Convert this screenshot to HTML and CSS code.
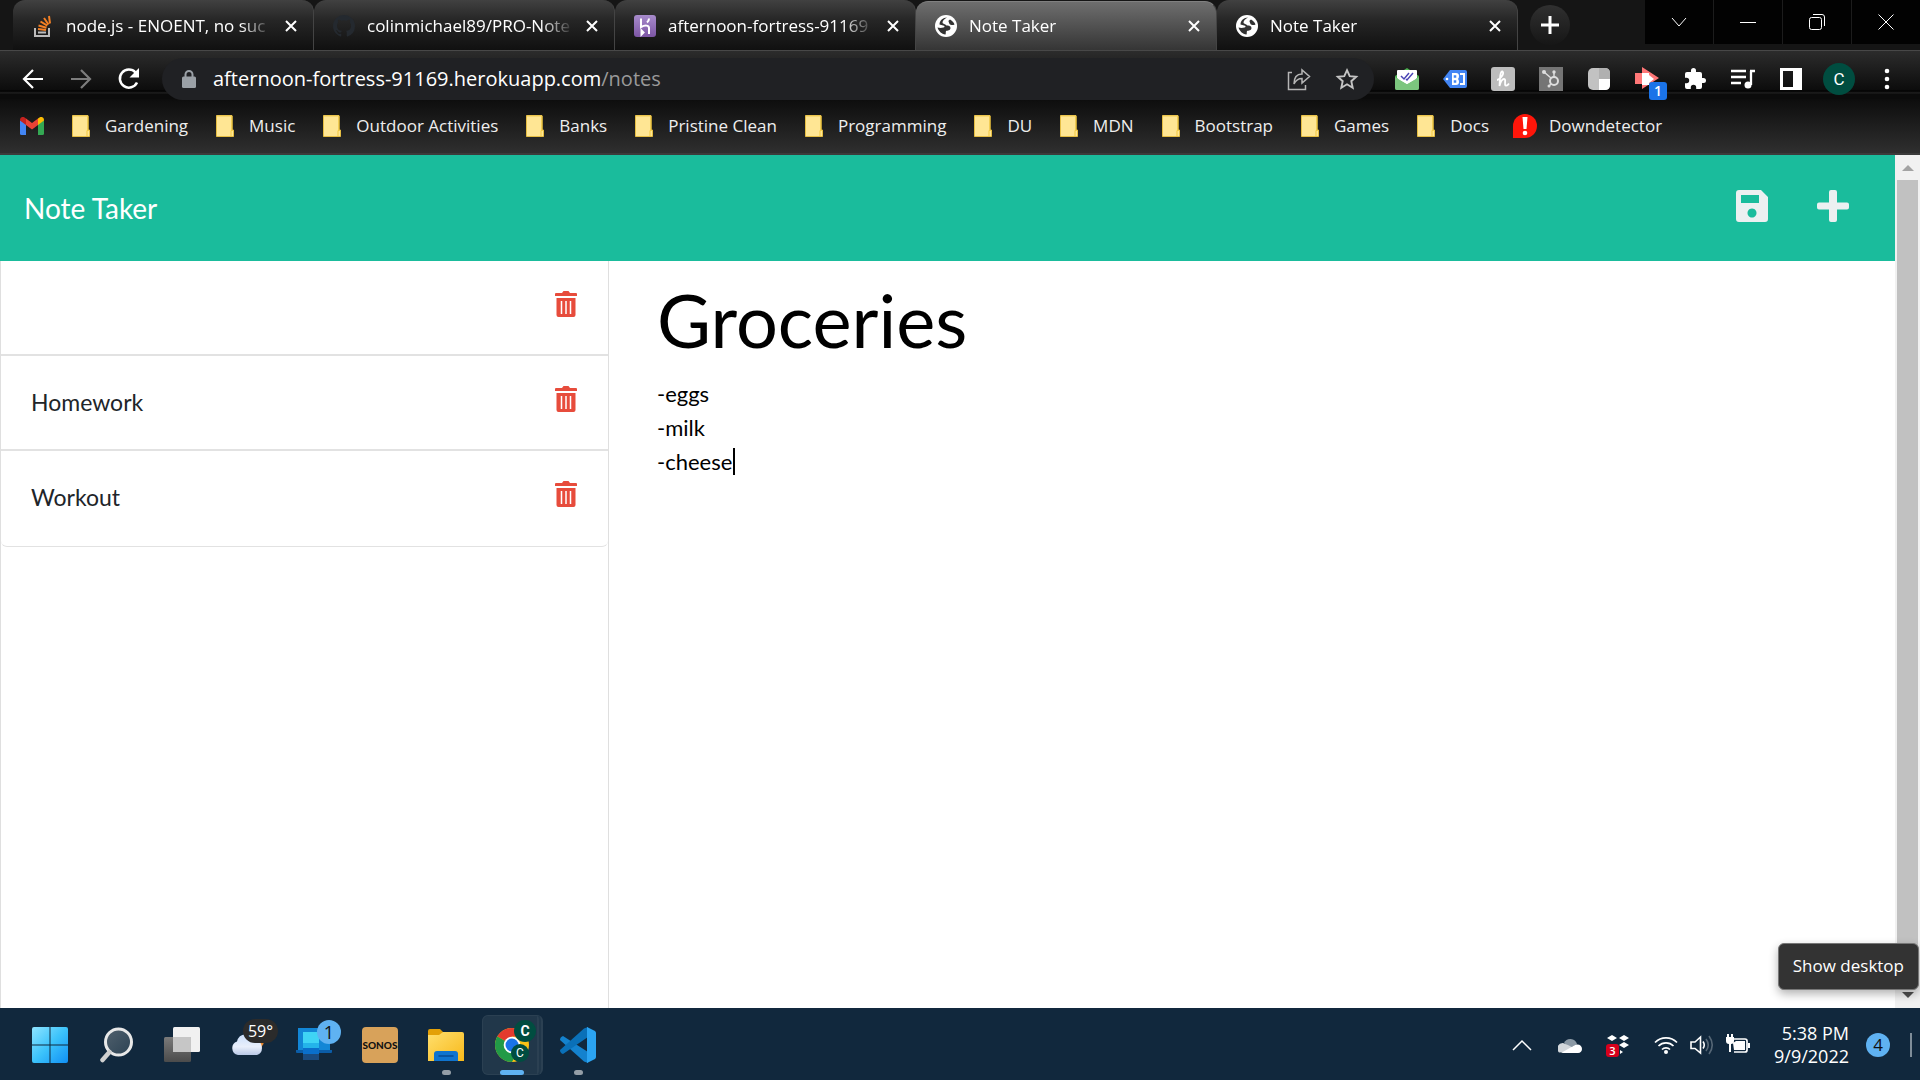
FILE: index.html
```html
<!DOCTYPE html>
<html lang="en">
<head>
<meta charset="utf-8">
<title>Note Taker</title>
<link rel="stylesheet" href="styles.css">
</head>
<body>
<svg class="sprite" aria-hidden="true">
  <defs>
    <linearGradient id="gWin" x1="0" y1="0" x2="1" y2="1"><stop offset="0" stop-color="#8fe4ff"/><stop offset=".5" stop-color="#3cc3fb"/><stop offset="1" stop-color="#1090f5"/></linearGradient>
    <linearGradient id="gCloud" x1="0" y1="0" x2="0" y2="1"><stop offset="0" stop-color="#c9defc"/><stop offset=".6" stop-color="#e9effb"/><stop offset="1" stop-color="#b9c8e6"/></linearGradient>
    <linearGradient id="gFolder" x1="0" y1="0" x2="1" y2="1"><stop offset="0" stop-color="#ffdf6e"/><stop offset="1" stop-color="#f8b91a"/></linearGradient>
    <linearGradient id="gHeroku" x1="0" y1="0" x2="0" y2="1"><stop offset="0" stop-color="#a78bcb"/><stop offset="1" stop-color="#7d56a5"/></linearGradient>
    <linearGradient id="gGlass" x1="0" y1="0" x2="1" y2="1"><stop offset="0" stop-color="#51616e"/><stop offset="1" stop-color="#2c4253"/></linearGradient>
    <linearGradient id="gBack" x1="0" y1="0" x2="0" y2="1"><stop offset="0" stop-color="#7a7a7a"/><stop offset="1" stop-color="#4b4b4b"/></linearGradient>
  </defs>
  <symbol id="close" viewBox="0 0 12 12"><path d="M1 1l10 10M11 1L1 11" fill="none" stroke="currentColor" stroke-width="2"/></symbol>
  <symbol id="folder" viewBox="0 0 18 22"><path d="M.5.5h15.500v14.500h1.500v6.500H.5z" fill="#ffe694" stroke="#e5bd42"/><path d="M15 21v-5.500h1.500M16 1v14" fill="none" stroke="#f3c93e"/><path d="M1 1h15" stroke="#f0cc58"/></symbol>
  <symbol id="globe" viewBox="0 0 22 22"><circle cx="11" cy="11" r="11" fill="#fff"/><path d="M12 2.500C9 4 7.500 5.500 7.500 8c1.500 1.500 3 1 4 2.500 2 0 4 .5 4 2.500 0 2.500-3 2.500-4.500 3-.5 1.500 0 2.500-.5 3.500C6.500 19 3.500 16 2.500 12.500c2 .5 4 .5 6 0 1 0 1.500-1.200.5-1.800L4.500 9.500C4.500 5.500 8 2.500 12 2.500zM19.500 9.500c-2 1-4 .5-5-.5l-1-2.500c0-1 .5-1.500 1.500-2 2 1 4 3 4.500 5z" fill="#333"/></symbol>
  <symbol id="trash" viewBox="0 0 22 26"><path d="M1 2h6l1.500-2h5L15 2h6q1 0 1 1v2H0V3q0-1 1-1zM1.500 7h19v17q0 2-2 2h-15q-2 0-2-2z" fill="currentColor"/><path d="M6.500 10v13M11 10v13M15.500 10v13" stroke="#fff" stroke-width="1.500"/></symbol>
</svg>

<div class="screen">
  <header class="browser">
    <div class="tabstrip">
      <div class="tab">
        <svg class="fav" viewBox="0 0 22 22"><path d="M3 13v8h14v-8M6 17.500h8" fill="none" stroke="#bcbbbb" stroke-width="2"/><path d="M6 14l8 1M6.500 10.500l8 2.200M8.500 6.500l6.800 4.200M12 3l4.500 6.500M17 1l1 7.500" stroke="#f48024" stroke-width="2"/></svg>
        <span class="tab-title">node.js - ENOENT, no suc</span>
        <button class="tab-close" aria-label="Close tab"><svg viewBox="0 0 12 12"><use href="#close"/></svg></button>
      </div>
      <div class="tab">
        <svg class="fav" viewBox="0 0 16 16"><path fill="#24292f" d="M8 0C3.580 0 0 3.580 0 8c0 3.540 2.290 6.530 5.470 7.590.4.070.55-.17.55-.38 0-.19-.01-.82-.01-1.490-2.010.37-2.530-.49-2.690-.94-.09-.23-.48-.94-.82-1.130-.28-.15-.68-.52-.01-.53.63-.01 1.080.58 1.230.82.72 1.210 1.870.87 2.330.66.070-.52.28-.87.51-1.070-1.780-.2-3.640-.89-3.640-3.950 0-.87.31-1.590.82-2.150-.08-.2-.36-1.020.08-2.120 0 0 .67-.21 2.200.82a7.600 7.600 0 0 1 4 0c1.530-1.040 2.200-.82 2.200-.82.44 1.100.16 1.920.08 2.120.51.56.82 1.270.82 2.150 0 3.070-1.870 3.750-3.650 3.950.29.25.54.73.54 1.480 0 1.070-.01 1.930-.01 2.200 0 .21.15.46.55.38A8 8 0 0 0 16 8c0-4.420-3.580-8-8-8z"/></svg>
        <span class="tab-title">colinmichael89/PRO-Note</span>
        <button class="tab-close" aria-label="Close tab"><svg viewBox="0 0 12 12"><use href="#close"/></svg></button>
      </div>
      <div class="tab">
        <svg class="fav" viewBox="0 0 22 22"><rect width="22" height="22" rx="3" fill="url(#gHeroku)"/><path d="M7 3.500v8.500c4-2 8-2 8 1v6M15 3.500c0 1.500-.8 3-2 4M7.500 15.500v4l2-2z" fill="none" stroke="#fff" stroke-width="2"/></svg>
        <span class="tab-title">afternoon-fortress-91169</span>
        <button class="tab-close" aria-label="Close tab"><svg viewBox="0 0 12 12"><use href="#close"/></svg></button>
      </div>
      <div class="tab active">
        <svg class="fav" viewBox="0 0 22 22"><use href="#globe"/></svg>
        <span class="tab-title">Note Taker</span>
        <button class="tab-close" aria-label="Close tab"><svg viewBox="0 0 12 12"><use href="#close"/></svg></button>
      </div>
      <div class="tab">
        <svg class="fav" viewBox="0 0 22 22"><use href="#globe"/></svg>
        <span class="tab-title">Note Taker</span>
        <button class="tab-close" aria-label="Close tab"><svg viewBox="0 0 12 12"><use href="#close"/></svg></button>
      </div>
      <button class="new-tab" aria-label="New tab"><svg viewBox="0 0 18 18"><path d="M9 0v18M0 9h18" stroke="#fff" stroke-width="3"/></svg></button>
      <div class="window-controls">
        <button aria-label="Search tabs"><svg viewBox="0 0 16 16"><path d="M1 4l7 8 7-8" fill="none" stroke="#fff"/></svg></button>
        <button aria-label="Minimize"><svg viewBox="0 0 16 16"><path d="M0 8.500h16" stroke="#fff"/></svg></button>
        <button aria-label="Restore"><svg viewBox="0 0 16 16"><rect x=".5" y="3.500" width="12" height="12" rx="2" fill="none" stroke="#fff"/><path d="M4 .5h9q2.500 0 2.500 2.500v9" fill="none" stroke="#fff"/></svg></button>
        <button aria-label="Close"><svg viewBox="0 0 16 16"><path d="M.5.5l15 15M15.500.5l-15 15" stroke="#fff"/></svg></button>
      </div>
    </div>

    <div class="toolbar">
      <div class="icon-row">
        <button aria-label="Back"><svg viewBox="0 0 24 24"><path d="M22 12H3M12 3l-9 9 9 9" fill="none" stroke="#fff" stroke-width="2.200"/></svg></button>
        <button aria-label="Forward"><svg viewBox="0 0 24 24"><path d="M2 12h19M12 3l9 9-9 9" fill="none" stroke="#7d7d7d" stroke-width="2.200"/></svg></button>
        <button aria-label="Reload"><svg viewBox="0 0 24 24"><path d="M20 15.500A9 9 0 1 1 18.500 5.500L21 8" fill="none" stroke="#fff" stroke-width="2.500"/><path d="M22 1v9.500h-9.500z" fill="#fff"/></svg></button>
      </div>
      <div class="omnibox">
        <svg class="lock" viewBox="0 0 14 18"><path d="M3.500 8V4.500a3.500 3.500 0 0 1 7 0V8" fill="none" stroke="#9aa0a6" stroke-width="2"/><rect y="6.500" width="14" height="11.500" rx="1.500" fill="#9aa0a6"/></svg>
        <span class="url"><b>afternoon-fortress-91169.herokuapp.com</b>/notes</span>
        <button aria-label="Share"><svg viewBox="0 0 24 24"><path d="M5 5.500H1.500v17h17V18M7 17c0-7 3-10 8-10V3l7.500 6.500L15 16v-4.500c-4 0-6 1.500-8 5.500z" fill="none" stroke="#b5b5b5" stroke-width="1.500"/></svg></button>
        <button aria-label="Bookmark this tab"><svg viewBox="0 0 24 24"><path d="M12 3.200l2.700 6 6.500.6-4.900 4.400 1.400 6.500-5.700-3.400-5.700 3.400 1.400-6.500L2.800 9.800l6.500-.6z" fill="none" stroke="#c4c4c4" stroke-width="1.900"/></svg></button>
      </div>
      <div class="icon-row">
        <button aria-label="Mail tracker"><svg viewBox="0 0 24 24"><path d="M0 9L12 1l12 8v12q0 2-2 2H2q-2 0-2-2z" fill="#4caf50"/><path d="M3 3h18v10l-9 5-9-5z" fill="#fff"/><path d="M0 10l12 7 12-7v11q0 2-2 2H2q-2 0-2-2z" fill="#7cc67e"/><path d="M2 4q0-1 1-1h18q1 0 1 1v7l-10 6-10-6z" fill="#fff"/><path d="M6 9l3 3 5-6M11 12l1 1 6-7" fill="none" stroke="#4a45b5" stroke-width="1.500"/></svg></button>
        <button aria-label="Shopping tag"><svg viewBox="0 0 24 24"><path d="M7 3h15q2 0 2 2v14q0 2-2 2H7l-7-9z" fill="#4285f4"/><circle cx="4" cy="12" r="1.300" fill="#fff"/><path d="M9 6h4q3 0 3 3 0 2-1 3 1 1 1 3 0 3-3 3H9z" fill="#fff"/><path d="M12 9.500v.01M12 14.500v.01" stroke="#4285f4" stroke-width="2.500" stroke-linecap="square"/><path d="M17 7h4v10h-4" fill="none" stroke="#fff" stroke-width="2"/></svg></button>
        <button aria-label="Honey"><svg viewBox="0 0 24 24"><rect width="24" height="24" rx="3" fill="#bdbdbd"/><path d="M6 13c3 0 8-7 5.500-8.500C9 4 9 12 8.500 19c1-4 2.500-7 4.500-7 2.500 0 0 5 1.500 6.500 1 .5 2.500-.5 3.500-2" fill="none" stroke="#fff" stroke-width="1.800"/></svg></button>
        <button aria-label="HubSpot"><svg viewBox="0 0 24 24"><rect width="24" height="24" fill="#757575"/><circle cx="15" cy="14" r="4" fill="none" stroke="#ddd" stroke-width="2"/><path d="M5 5l7 6M15 10V5M12 17l-2 2" stroke="#ddd" stroke-width="1.500"/><circle cx="5" cy="5" r="2" fill="#ddd"/><circle cx="15" cy="5" r="1.700" fill="#ddd"/><circle cx="10" cy="19" r="1.500" fill="#ddd"/></svg></button>
        <button aria-label="Extension"><svg viewBox="0 0 24 24"><rect x="1" y="1" width="22" height="22" rx="5" fill="#c2c2c2"/><path d="M12 1h6q5 0 5 5v6H12z" fill="#b0b0b0"/><path d="M12 12h11v6q0 5-5 5h-6z" fill="#fff"/></svg></button>
        <button class="badged" aria-label="Screen recorder"><svg viewBox="0 0 24 24"><path d="M0 6h7V0l17 11L7 22v-5H0z" fill="#f77"/><path d="M7 6h7v2l5 4-5 4v2H7z" fill="#fff"/></svg><span class="ext-badge">1</span></button>
        <button aria-label="Extensions"><svg viewBox="0 0 24 24"><path d="M20.500 11H19V7a2 2 0 0 0-2-2h-4V3.500a2.500 2.500 0 0 0-5 0V5H4a2 2 0 0 0-2 2v3.800h1.500a2.700 2.700 0 0 1 0 5.400H2V20a2 2 0 0 0 2 2h3.800v-1.500a2.700 2.700 0 0 1 5.400 0V22H17a2 2 0 0 0 2-2v-4h1.500a2.500 2.500 0 0 0 0-5z" fill="#fff"/></svg></button>
        <button aria-label="Media controls"><svg viewBox="0 0 24 24"><path d="M0 4h15M0 10h15M0 16h10M20 4v14M19 4h5" stroke="#fff" stroke-width="2.300"/><circle cx="17" cy="18" r="3.500" fill="#fff"/></svg></button>
        <button aria-label="Side panel"><svg viewBox="0 0 24 24"><path d="M1 1h22v22H1zM4 4v16h10V4z" fill="#fff" fill-rule="evenodd"/></svg></button>
        <button aria-label="Profile"><span class="avatar">C</span></button>
        <button aria-label="Menu"><svg viewBox="0 0 24 24"><circle cx="12" cy="4" r="2.300" fill="#fff"/><circle cx="12" cy="12" r="2.300" fill="#fff"/><circle cx="12" cy="20" r="2.300" fill="#fff"/></svg></button>
      </div>
    </div>

    <nav class="bookmarks">
      <a href="#" aria-label="Gmail"><svg class="mark" viewBox="0 0 24 18"><path d="M0 3v13.500Q0 18 1.500 18H6V7z" fill="#4285f4"/><path d="M24 3v13.500q0 1.500-1.500 1.500H18V7z" fill="#34a853"/><path d="M18 1.500V8l6-4.500V3c0-2.500-2.500-4-4.500-2.600z" fill="#fbbc04"/><path d="M6 8V1.500L12 6l6-4.500V8l-6 4.500z" fill="#ea4335"/><path d="M0 3v.5L6 8V1.500L4.500.4C2.500-1 0 .5 0 3z" fill="#c5221f"/></svg></a>
      <a href="#"><svg class="dir" viewBox="0 0 18 22"><use href="#folder"/></svg>Gardening</a>
      <a href="#"><svg class="dir" viewBox="0 0 18 22"><use href="#folder"/></svg>Music</a>
      <a href="#"><svg class="dir" viewBox="0 0 18 22"><use href="#folder"/></svg>Outdoor Activities</a>
      <a href="#"><svg class="dir" viewBox="0 0 18 22"><use href="#folder"/></svg>Banks</a>
      <a href="#"><svg class="dir" viewBox="0 0 18 22"><use href="#folder"/></svg>Pristine Clean</a>
      <a href="#"><svg class="dir" viewBox="0 0 18 22"><use href="#folder"/></svg>Programming</a>
      <a href="#"><svg class="dir" viewBox="0 0 18 22"><use href="#folder"/></svg>DU</a>
      <a href="#"><svg class="dir" viewBox="0 0 18 22"><use href="#folder"/></svg>MDN</a>
      <a href="#"><svg class="dir" viewBox="0 0 18 22"><use href="#folder"/></svg>Bootstrap</a>
      <a href="#"><svg class="dir" viewBox="0 0 18 22"><use href="#folder"/></svg>Games</a>
      <a href="#"><svg class="dir" viewBox="0 0 18 22"><use href="#folder"/></svg>Docs</a>
      <a href="#"><svg class="mark alert" viewBox="0 0 24 24"><path d="M12 0a12 12 0 0 1 0 24H0V12A12 12 0 0 1 12 0z" fill="#ff160a"/><path d="M9.500 3h5l-1 12h-3z" fill="#fff"/><circle cx="12" cy="19" r="2.300" fill="#fff"/></svg>Downdetector</a>
    </nav>
  </header>

  <div class="viewport">
    <div class="page">
      <nav class="navbar">
        <a class="brand" href="#">Note Taker</a>
        <div class="actions">
          <button aria-label="Save note"><svg viewBox="0 0 32 32"><path d="M3 0h22l7 7v22q0 3-3 3H3q-3 0-3-3V3q0-3 3-3zM5 5v8h18V5zM16 18.500a4.500 4.500 0 1 0 .01 0z" fill="#ecf0f1" fill-rule="evenodd"/></svg></button>
          <button aria-label="New note"><svg viewBox="0 0 32 32"><path d="M14 0h4q2 0 2 2v10.500h10q2 0 2 2v3q0 2-2 2H20V30q0 2-2 2h-4q-2 0-2-2V19.500H2q-2 0-2-2v-3q0-2 2-2h10V2q0-2 2-2z" fill="#ecf0f1"/></svg></button>
        </div>
      </nav>
      <main class="workspace">
        <aside class="sidebar">
          <ul class="notes">
            <li><span></span><button aria-label="Delete note"><svg viewBox="0 0 22 26"><use href="#trash"/></svg></button></li>
            <li><span>Homework</span><button aria-label="Delete note"><svg viewBox="0 0 22 26"><use href="#trash"/></svg></button></li>
            <li><span>Workout</span><button aria-label="Delete note"><svg viewBox="0 0 22 26"><use href="#trash"/></svg></button></li>
          </ul>
        </aside>
        <section class="editor">
          <input class="note-title" type="text" aria-label="Note title" value="Groceries">
          <div class="note-body">
            <textarea aria-label="Note text">-eggs
-milk
-cheese</textarea>
            <span class="caret"></span>
          </div>
        </section>
      </main>
    </div>
    <div class="scrollbar">
      <svg viewBox="0 0 12 6"><path d="M6 0l6 6H0z" fill="#a3a3a3"/></svg>
      <div class="thumb"></div>
      <svg viewBox="0 0 12 6"><path d="M0 0h12L6 6z" fill="#505050"/></svg>
    </div>
    <div class="tooltip" role="tooltip">Show desktop</div>
  </div>

  <footer class="taskbar">
    <div class="apps">
      <button aria-label="Start"><svg viewBox="0 0 36 36"><path d="M2 0h15.500v17.500H0V2q0-2 2-2zM18.500 0H34q2 0 2 2v15.500H18.500zM0 18.500h17.500V36H2q-2 0-2-2zM18.500 18.500H36V34q0 2-2 2H18.500z" fill="url(#gWin)"/></svg></button>
      <button aria-label="Search"><svg viewBox="0 0 36 36"><circle cx="20.500" cy="15" r="13" fill="url(#gGlass)" stroke="#e8e8e8" stroke-width="3"/><path d="M11.500 25l-7 8" stroke="#d0d0d0" stroke-width="4.500" stroke-linecap="round"/></svg></button>
      <button aria-label="Task view"><svg viewBox="0 0 36 36"><rect y="10" width="27" height="25" rx="1.500" fill="url(#gBack)"/><rect x="9" width="27" height="25" rx="1.500" fill="#f1f1f1"/><path d="M9 10h18v15H9z" fill="#c6c6c6"/></svg></button>
      <button aria-label="Weather"><svg viewBox="0 0 36 36"><circle cx="26" cy="14" r="8" fill="#e8862c"/><path d="M8 28a7 7 0 0 1-1-13.500 9.500 9.500 0 0 1 18-1.500A7.800 7.800 0 0 1 27 28z" fill="url(#gCloud)"/></svg><span class="badge temp">59°</span></button>
      <button aria-label="Phone Link"><svg viewBox="0 0 36 36"><path d="M2 1h32v24H2z" fill="#1286d6"/><path d="M0 23h36v2q0 1-1 1H1q-1 0-1-1z" fill="#0b5da8"/><path d="M7 5h16v12H7z" fill="#3fd4f5"/><path d="M7 16h16v6H7z" fill="#24b4ea"/><path d="M7 21h16v6H7z" fill="#0a6fcb"/><path d="M7 27h16v6H7z" fill="#1a4b80"/></svg><span class="badge count">1</span></button>
      <button aria-label="Sonos"><span class="sonos">SONOS</span></button>
      <button class="running" aria-label="File Explorer"><svg viewBox="0 0 36 36"><path d="M0 4q0-2 2-2h10l3 3v5H0z" fill="#e3a008"/><path d="M0 8h11l4-3h19q2 0 2 2v27H0z" fill="url(#gFolder)"/><path d="M6 34v-7q0-3 3-3h18q3 0 3 3v7z" fill="#0f74cf"/><path d="M11 29h14" stroke="#084b92" stroke-width="1.500" stroke-linecap="round"/></svg></button>
      <button class="current" aria-label="Google Chrome"><svg viewBox="0 0 36 36"><circle cx="18" cy="18" r="17" fill="#fbc116"/><path d="M18 18L3.300 9.500A17 17 0 0 1 32.700 9.500H18z" fill="#e33b2e"/><path d="M18 18L3.300 9.500A17 17 0 0 0 18 35l7-13z" fill="#229a47"/><circle cx="18" cy="18" r="8.300" fill="#fff"/><circle cx="18" cy="18" r="6.500" fill="#1a73e8"/></svg><span class="badge chrome-a">C</span><span class="badge chrome-b">C</span></button>
      <button class="running" aria-label="Visual Studio Code"><svg viewBox="0 0 36 36"><path d="M3 9q-3 1-3 4l24 21.500 4 1.500V25z" fill="#1482ce"/><path d="M3 27q-3-1-3-4L24 1.500 28 0v10z" fill="#0a70b8"/><path d="M27 0l8 4q1 1 1 2v24q0 1-1 2l-8 4z" fill="#2ba4f2"/></svg></button>
    </div>
    <div class="tray">
      <button aria-label="Show hidden icons"><svg viewBox="0 0 24 24"><path d="M3 17l9-9 9 9" fill="none" stroke="#fff" stroke-width="1.500"/></svg></button>
      <button aria-label="OneDrive"><svg viewBox="0 0 24 24"><path d="M6 10a7 7 0 0 1 13 1l-7 4z" fill="#8b99a5"/><path d="M1 19.500A5.500 5.500 0 0 1 5 10l6 2.500 10 6z" fill="#d2d7db"/><path d="M3 20l14-8c4-1.500 7 1 7 4 0 2-1.500 4-4 4z" fill="#fff"/></svg></button>
      <button class="badged" aria-label="Dropbox"><svg viewBox="0 0 24 24"><path d="M1 5l5-3 5 3-5 3zM13 5l5-3 5 3-5 3zM13 12l5-3 5 3-5 3zM14 17l3 2-3 2z" fill="#fff"/></svg><span class="drop-badge">3</span></button>
    </div>
    <button class="system" aria-label="Network, volume and battery">
      <svg viewBox="0 0 24 24"><path d="M1 9.500a15.500 15.500 0 0 1 22 0M4.500 13a10.500 10.500 0 0 1 15 0M8 16.500a5.600 5.600 0 0 1 8 0" fill="none" stroke="#fff" stroke-width="1.700"/><circle cx="12" cy="19" r="2" fill="#fff"/></svg>
      <svg viewBox="0 0 24 24"><path d="M1 9h4l5.500-5v16L5 15.500H1zM13 8.500q2.500 3.500 0 7" fill="none" stroke="#fff" stroke-width="1.600"/><path d="M16 6q4.500 6 0 12M19 3q6.500 9 0 18" fill="none" stroke="#566776" stroke-width="1.600"/></svg>
      <svg viewBox="0 0 24 24"><path d="M8 6h11q2 0 2 2v9q0 2-2 2H8" fill="none" stroke="#fff" stroke-width="1.700"/><path d="M7 10l3-2h9v9H8zM22 10h2v5h-2zM0 4h8v4q0 3-3 3v8H3v-8q-3 0-3-3zM1 1h2v4H1zM5 1h2v4H5z" fill="#fff"/></svg>
    </button>
    <div class="clock"><span>5:38 PM</span><span>9/9/2022</span></div>
    <button class="notices" aria-label="Notifications">4</button>
    <button class="show-desktop" aria-label="Show desktop"></button>
  </footer>
</div>
</body>
</html>
```
FILE: styles.css
```css
* { box-sizing: border-box; }
body { margin: 0; font-family: "Open Sans", "Noto Sans", sans-serif; }
button { padding: 0; border: 0; background: none; color: inherit; font: inherit; display: flex; align-items: center; justify-content: center; }
svg { display: block; flex: none; }
a { color: inherit; text-decoration: none; }
.sprite { position: absolute; width: 0; height: 0; }

.screen { display: flex; flex-direction: column; min-height: 100vh; }

/* Browser chrome */
.browser { color: #fff; background: #1a1a1a; }
.tabstrip { display: flex; height: 50px; padding-left: 13px; background: #151515; }
.tab { display: flex; align-items: center; flex: 0 1 301px; min-width: 0; padding: 2px 16px 0 19px; gap: 12px; border-radius: 12px 12px 0 0; background: linear-gradient(#414141, #262626 40%, #101010); border-right: 1px solid #444; }
.tab.active { margin-top: 1px; padding-top: 0; background: linear-gradient(#6e6e6e, #353535); border-top: 1px solid #808080; }
.fav { width: 22px; height: 22px; }
.tab-title { flex: 1; min-width: 0; overflow: hidden; white-space: nowrap; font-size: 17px; line-height: 24px; mask-image: linear-gradient(to right, #000 84%, transparent); }
.tab-close svg { width: 12px; height: 12px; }
.new-tab { width: 40px; height: 40px; margin: 5px 0 0 12px; border-radius: 50%; background: linear-gradient(#303030, #161616); }
.new-tab svg { width: 18px; height: 18px; }
.window-controls { display: flex; margin-left: auto; height: 44px; gap: 1px; background: #1c1c1c; }
.window-controls button { width: 68px; background: #020202; }
.window-controls svg { width: 16px; height: 16px; }

.toolbar { display: flex; align-items: center; height: 49px; padding: 7px 9px 0; gap: 9px; border-top: 1px solid #484848; background: linear-gradient(#2c2c2c, #0c0c0c 39px, #000 40px, #222 42px, #0b0b0b 43px); }
.icon-row { display: flex; }
.icon-row button { width: 48px; height: 42px; }
.icon-row svg { width: 24px; height: 24px; }
.omnibox { display: flex; align-items: center; flex: 1; height: 42px; padding: 0 3px 0 20px; border-radius: 21px; background: #202124; }
.omnibox button { width: 48px; }
.omnibox button svg { width: 24px; height: 24px; }
.lock { width: 14px; height: 18px; }
.url { flex: 1; padding-left: 17px; font-size: 20px; line-height: 28px; color: #9a9a9a; white-space: nowrap; }
.url b { font-weight: 400; color: #fff; }
.badged { position: relative; }
.ext-badge { position: absolute; right: 4px; bottom: 0; width: 18px; border-radius: 3px; background: #1a73e8; font-size: 14px; line-height: 18px; font-weight: 600; }
.avatar { width: 32px; border-radius: 50%; background: #004d40; font-family: Roboto, sans-serif; font-size: 17px; line-height: 32px; }

.bookmarks { display: flex; align-items: center; height: 56px; padding: 0 20px; gap: 28px; background: linear-gradient(#0d0d0d, #2f2f2f); border-bottom: 2px solid #3b3b3b; font-size: 17px; line-height: 24px; white-space: nowrap; color: #eee; }
.bookmarks a { display: flex; align-items: center; gap: 15px; }
.mark { width: 24px; height: 18px; }
.mark.alert { height: 24px; }
.bookmarks a:last-child { gap: 12px; margin-left: -4px; }
.dir { width: 18px; height: 22px; }

/* Note Taker page */
.viewport { position: relative; display: flex; flex: 1; background: #fff; }
.page { display: flex; flex-direction: column; flex: 1; min-width: 0; font-family: Lato, sans-serif; color: #212529; }
.navbar { display: flex; align-items: center; justify-content: space-between; height: 106px; padding: 0 46px 0 24px; background: #1abc9c; color: #fff; }
.brand { font-size: 28px; line-height: 42px; }
.actions { display: flex; gap: 49px; margin-bottom: 4px; }
.actions svg { width: 32px; height: 32px; }
.workspace { display: flex; flex: 1; }
.sidebar { flex: 0 0 609px; border: solid #dfdfdf; border-width: 0 1px; }
.notes { margin: 0; padding: 0; list-style: none; }
.notes li { display: flex; justify-content: space-between; height: 95px; padding: 30px 31px 0 30px; border-bottom: 2px solid #e2e2e2; font-size: 23px; line-height: 32px; }
.notes li:last-child { height: 96px; border-bottom-width: 1px; border-radius: 0 0 6px 6px; }
.notes button { align-self: flex-start; color: #e74c3c; }
.notes svg { width: 22px; height: 26px; }
.editor { flex: 1; padding: 12px 48px 0; color: #000; }
.note-title, .note-body textarea { display: block; width: 100%; padding: 0; border: 0; outline: 0; background: none; color: inherit; font-family: inherit; resize: none; }
.note-title { height: 92px; font-size: 74px; }
.note-body { position: relative; padding-top: 12px; }
.note-body textarea { height: 500px; font-size: 22px; line-height: 34px; }
.caret { position: absolute; left: 76px; top: 83px; width: 2px; height: 27px; background: #000; }

.scrollbar { display: flex; flex-direction: column; align-items: center; width: 25px; padding: 10px 0; gap: 9px; background: #f1f1f1; }
.scrollbar svg { width: 12px; height: 6px; }
.thumb { flex: 1; width: 21px; background: #c1c1c1; }
.tooltip { position: absolute; right: 1px; bottom: 18px; padding: 10px 14px 11px; border: 1px solid #777; border-radius: 6px; background: #333; color: #fff; font-size: 17px; line-height: 24px; box-shadow: 0 4px 10px rgba(0, 0, 0, .3); }

/* Taskbar */
.taskbar { display: flex; align-items: center; height: 72px; padding: 2px 8px 0 17px; background: #11283d; color: #fff; }
.apps { display: flex; margin-right: auto; }
.apps button { position: relative; width: 66px; height: 60px; }
.apps svg { width: 36px; height: 36px; }
.sonos { width: 36px; border-radius: 4px; background: #d8a25a; color: #111; font: 900 10px/36px Lato, sans-serif; }
.badge { position: absolute; border-radius: 12px; }
.temp { right: 3px; top: 4px; width: 35px; background: #2b2b2b; font-size: 16px; line-height: 24px; }
.count { right: 6px; top: 5px; width: 24px; background: #5fb2f2; color: #111; font-size: 18px; line-height: 24px; }
.chrome-a { right: 9px; top: 5px; width: 22px; background: #004d40; font: 700 14px/22px Roboto, sans-serif; }
.chrome-b { right: 16px; top: 29px; width: 18px; background: #004d40; font: 12px/18px Roboto, sans-serif; }
.running::after, .current::after { content: ""; position: absolute; bottom: 0; width: 9px; height: 5px; border-radius: 3px; background: #949ea7; }
.current::after { width: 24px; background: #5fb2f2; }
.current::before { content: ""; position: absolute; inset: 0 2px 0 3px; border: 1px solid #2b4052; border-right: 6px double #2b4052; border-radius: 6px; background: #21374a; }
.current svg { position: relative; }
.tray { display: flex; margin-right: 12px; }
.tray button { width: 48px; height: 48px; }
.tray svg { width: 24px; height: 24px; }
.drop-badge { position: absolute; left: 12px; bottom: 12px; width: 13px; border-radius: 3px; background: #d6001c; font-size: 11px; line-height: 13px; font-weight: 600; }
.system { gap: 12px; margin-right: 22px; }
.system svg { width: 24px; height: 24px; }
.clock { display: flex; flex-direction: column; width: 77px; text-align: right; white-space: nowrap; font-size: 18px; line-height: 23px; }
.notices { width: 24px; margin: 0 20px 0 17px; border-radius: 50%; background: #5fb2f2; color: #111; font-size: 17px; line-height: 24px; }
.show-desktop { width: 2px; height: 24px; background: #7f8d99; }
```
